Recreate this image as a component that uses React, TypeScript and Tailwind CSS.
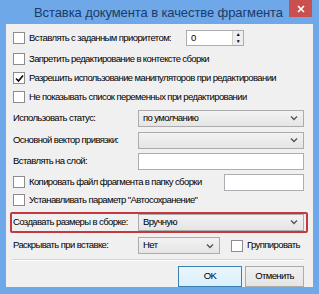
import React from "react";

const font = { fontFamily: '"Liberation Sans", Arial, sans-serif' };

function Check({ checked = false }: { checked?: boolean }) {
  return (
    <span className="w-[12px] h-[12px] shrink-0 border border-[#8c8c8c] bg-white flex items-center justify-center">
      {checked && (
        <svg width="9" height="9" viewBox="0 0 9 9">
          <path d="M1 4.5 L3.5 7 L8 1.5" fill="none" stroke="#111" strokeWidth="1.7" />
        </svg>
      )}
    </span>
  );
}

function Chevron() {
  return (
    <svg width="8" height="6" viewBox="0 0 8 6" className="shrink-0">
      <path d="M1 1.5 L4 4.5 L7 1.5" fill="none" stroke="#555" strokeWidth="1.4" />
    </svg>
  );
}

function Select({ value = "", className = "" }: { value?: string; className?: string }) {
  return (
    <div
      className={`h-[17px] border border-[#acacac] bg-gradient-to-b from-[#f2f2f2] to-[#e5e5e5] flex items-center justify-between pl-[4px] pr-[5px] ${className}`}
    >
      <span>{value}</span>
      <Chevron />
    </div>
  );
}

export default function App() {
  return (
    <div className="w-[319px] h-[294px] bg-[#6ea8e8] flex flex-col whitespace-nowrap" style={font}>
      <div className="h-[24px] flex items-start relative shrink-0">
        <div className="flex-1 text-center text-[13px] tracking-[-0.1px] leading-[24px] text-[#1b3b68] pt-[1px] pr-[2px]">
          Вставка документа в качестве фрагмента
        </div>
        <div className="absolute right-[7px] top-0 w-[23px] h-[17px] bg-[#c9504f] flex items-center justify-center">
          <svg width="8" height="8" viewBox="0 0 8 8">
            <path d="M1 1 L7 7 M7 1 L1 7" stroke="#fff" strokeWidth="1.6" />
          </svg>
        </div>
      </div>
      <div className="mx-[6px] h-[263px] bg-[#f0f0f0] flex flex-col text-[9.5px] tracking-[-0.6px] text-black pl-[7px] pr-[9px] pt-[6px]">
        <div className="flex items-center h-[17px] gap-[4px]">
          <Check />
          <span className="w-[153px]">Вставлять с заданным приоритетом:</span>
          <div className="w-[58px] h-[16px] border border-[#abadb3] bg-white flex items-center justify-between pl-[4px]">
            <span>0</span>
            <div className="w-[11px] h-full flex flex-col border-l border-[#d0d0d0] bg-[#eee]">
              <div className="flex-1 flex items-center justify-center text-[5px] leading-none">▲</div>
              <div className="flex-1 flex items-center justify-center text-[5px] leading-none">▼</div>
            </div>
          </div>
        </div>
        <div className="flex items-center gap-[4px] mt-[6px] h-[13px]">
          <Check />
          <span>Запретить редактирование в контексте сборки</span>
        </div>
        <div className="flex items-center gap-[4px] mt-[6px] h-[13px]">
          <Check checked />
          <span>Разрешить использование манипуляторов при редактировании</span>
        </div>
        <div className="flex items-center gap-[4px] mt-[6px] h-[13px]">
          <Check />
          <span>Не показывать список переменных при редактировании</span>
        </div>
        <div className="flex items-center mt-[6px] h-[17px]">
          <span className="w-[125px]">Использовать статус:</span>
          <Select value="по умолчанию" className="flex-1" />
        </div>
        <div className="flex items-center mt-[5px] h-[17px]">
          <span className="w-[125px]">Основной вектор привязки:</span>
          <Select className="flex-1" />
        </div>
        <div className="flex items-center mt-[4px] h-[17px]">
          <span className="w-[125px]">Вставлять на слой:</span>
          <div className="flex-1 h-[17px] border border-[#abadb3] bg-white" />
        </div>
        <div className="flex items-center gap-[4px] mt-[4px] h-[17px]">
          <Check />
          <span className="flex-1">Копировать файл фрагмента в папку сборки</span>
          <div className="w-[80px] h-[17px] border border-[#abadb3] bg-white" />
        </div>
        <div className="flex items-center gap-[4px] mt-[3px] h-[13px]">
          <Check />
          <span>Устанавливать параметр "Автосохранение"</span>
        </div>
        <div className="-ml-[3px] -mr-[4px] mt-[5px] h-[22px] border-2 border-[#c23a3f] rounded-[2px] flex items-center pl-[1px] pr-[2px]">
          <span className="w-[125px]">Создавать размеры в сборке:</span>
          <Select value="Вручную" className="flex-1" />
        </div>
        <div className="flex items-center mt-[4px] h-[17px]">
          <span className="w-[125px]">Раскрывать при вставке:</span>
          <Select value="Нет" className="w-[82px]" />
          <div className="ml-[11px] flex items-center gap-[4px]">
            <Check />
            <span>Группировать</span>
          </div>
        </div>
        <div className="mt-[5px] border-t border-[#d5d5d5] border-b border-b-white" />
        <div className="flex justify-end gap-[3px] mt-[5px]">
          <div className="w-[64px] h-[21px] border border-[#3c7fb1] bg-gradient-to-b from-[#eaf6fd] to-[#d9f0fc] flex items-center justify-center">
            OK
          </div>
          <div className="w-[59px] h-[21px] border border-[#acacac] bg-gradient-to-b from-[#f0f0f0] to-[#e5e5e5] flex items-center justify-center">
            Отменить
          </div>
        </div>
      </div>
    </div>
  );
}
